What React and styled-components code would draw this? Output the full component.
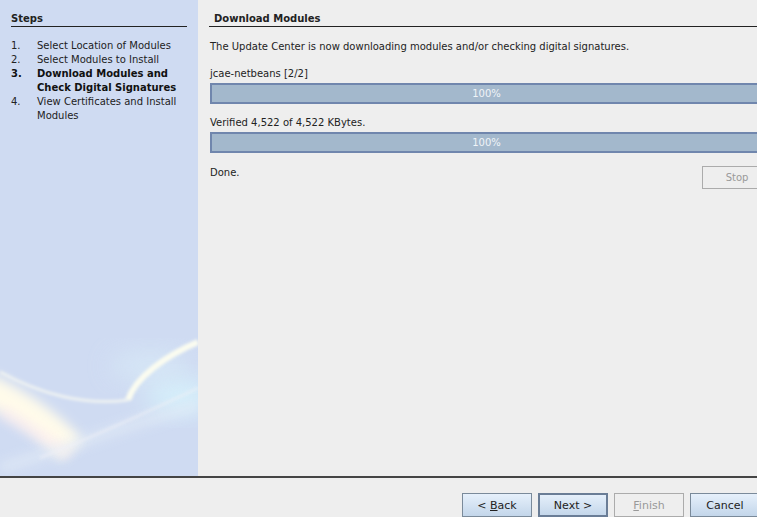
import React from 'react'
import styled, { createGlobalStyle } from 'styled-components'

const Global = createGlobalStyle`
  html, body {
    margin: 0;
    padding: 0;
    overflow: hidden;
    background: #eeeeee;
  }
  body {
    font-family: "DejaVu Sans", "Liberation Sans", sans-serif;
    font-size: 10px;
    color: #222;
  }
`

const Dialog = styled.div`
  width: 775px;
  height: 517px;
  display: flex;
  flex-direction: column;
  background: #eeeeee;
`

const Body = styled.div`
  display: flex;
  height: 476px;
  border-bottom: 2px solid #444;
  box-sizing: content-box;
`

const StepsPanel = styled.div`
  position: relative;
  width: 198px;
  flex: 0 0 198px;
  background: #cfdbf2;
  padding: 12px 11px 0 11px;
  box-sizing: border-box;
  overflow: hidden;
`

const PanelTitle = styled.div`
  font-weight: bold;
  line-height: 14px;
  border-bottom: 1px solid #222;
  padding-left: ${p => p.$indent || 0}px;
`

const StepList = styled.ol`
  list-style: none;
  margin: 12px 0 0 0;
  padding: 0;
  position: relative;
  z-index: 1;
`

const Step = styled.li`
  display: grid;
  grid-template-columns: 26px 1fr;
  line-height: 14px;
  font-weight: ${p => (p.$active ? 'bold' : 'normal')};
  color: ${p => (p.$active ? '#111' : '#222')};
`

const Swoosh = styled.svg`
  position: absolute;
  left: 0;
  bottom: 0;
  width: 198px;
  height: 180px;
`

const Content = styled.div`
  flex: 1;
  padding: 12px 0 0 11px;
  display: flex;
  flex-direction: column;
`

const Text = styled.div`
  line-height: 14px;
  padding-left: 1px;
  margin-top: ${p => p.$mt || 0}px;
`

const Bar = styled.div`
  margin-top: 2px;
  margin-left: 1px;
  height: 21px;
  box-sizing: border-box;
  border: 2px solid #7086ad;
  border-right: none;
  background: #a3b8cc;
  color: #f0f4f8;
  display: flex;
  align-items: center;
  justify-content: center;
  padding-right: 14px;
`

const StatusRow = styled.div`
  margin-top: 14px;
  display: flex;
  justify-content: space-between;
  align-items: flex-start;
  padding-left: 1px;
`

const Footer = styled.div`
  flex: 1;
  display: flex;
  justify-content: flex-end;
  align-items: flex-start;
  gap: 6px;
  padding: 15px 15px 0 0;
`

const Button = styled.button`
  font-family: inherit;
  font-size: 11px;
  height: 24px;
  width: 70px;
  padding: 0;
  box-sizing: border-box;
  border: 1px solid ${p => (p.$default ? '#6a7d96' : '#7a8a9a')};
  box-shadow: ${p => (p.$default ? 'inset 0 0 0 1px #6a7d96' : 'none')};
  background: linear-gradient(#e6f0fb, #c3d6ea);
  color: #222;
  border-radius: 0;
  &:disabled {
    background: #eeeeee;
    border-color: #ababab;
    color: #999;
  }
  u {
    text-decoration: underline;
  }
`

const StopButton = styled(Button)`
  height: 23px;
  width: 70px;
  font-size: 10px;
  margin-top: -1px;
  margin-right: 3px;
`

function SwooshArt() {
  return (
    <Swoosh viewBox="0 0 198 180">
      <defs>
        <filter id="b6" x="-50%" y="-50%" width="200%" height="200%">
          <feGaussianBlur stdDeviation="6" />
        </filter>
        <filter id="b2" x="-50%" y="-50%" width="200%" height="200%">
          <feGaussianBlur stdDeviation="1.5" />
        </filter>
        <filter id="b12" x="-50%" y="-50%" width="200%" height="200%">
          <feGaussianBlur stdDeviation="12" />
        </filter>
      </defs>
      <ellipse cx="180" cy="100" rx="35" ry="16" fill="#d6f1fb" filter="url(#b12)" />
      <ellipse cx="150" cy="70" rx="40" ry="14" fill="#d9ecf8" opacity="0.7" filter="url(#b12)" />
      <path d="M -15 92 C 25 112 50 130 72 154" stroke="#fffbea" strokeWidth="30" fill="none" filter="url(#b6)" />
      <path d="M 0 115 C 25 128 45 142 68 157" stroke="#fde9f2" strokeWidth="10" fill="none" opacity="0.6" filter="url(#b6)" />
      <path d="M 0 76 C 40 98 85 110 128 104" stroke="#eef2f2" strokeWidth="3" fill="none" filter="url(#b2)" />
      <path d="M 128 104 C 135 82 165 60 198 46" stroke="#fbfcf0" strokeWidth="6" fill="none" filter="url(#b2)" />
      <path d="M 0 172 C 60 155 120 130 198 110" stroke="#e4edf7" strokeWidth="8" fill="none" opacity="0.8" filter="url(#b6)" />
      <path d="M 40 162 C 90 142 135 122 198 92" stroke="#eef0f6" strokeWidth="3" fill="none" opacity="0.6" filter="url(#b2)" />
    </Swoosh>
  )
}

export default function App() {
  return (
    <Dialog>
      <Global />
      <Body>
        <StepsPanel>
          <PanelTitle>Steps</PanelTitle>
          <StepList>
            <Step><span>1.</span><span>Select Location of Modules</span></Step>
            <Step><span>2.</span><span>Select Modules to Install</span></Step>
            <Step $active><span>3.</span><span>Download Modules and Check Digital Signatures</span></Step>
            <Step><span>4.</span><span>View Certificates and Install Modules</span></Step>
          </StepList>
          <SwooshArt />
        </StepsPanel>
        <Content>
          <PanelTitle $indent={5}>Download Modules</PanelTitle>
          <Text $mt={13}>The Update Center is now downloading modules and/or checking digital signatures.</Text>
          <Text $mt={13}>jcae-netbeans [2/2]</Text>
          <Bar>100%</Bar>
          <Text $mt={12}>Verified 4,522 of 4,522 KBytes.</Text>
          <Bar>100%</Bar>
          <StatusRow>
            <span>Done.</span>
            <StopButton disabled>Stop</StopButton>
          </StatusRow>
        </Content>
      </Body>
      <Footer>
        <Button>&lt; <u>B</u>ack</Button>
        <Button $default>Next &gt;</Button>
        <Button disabled><u>F</u>inish</Button>
        <Button>Cancel</Button>
      </Footer>
    </Dialog>
  )
}
